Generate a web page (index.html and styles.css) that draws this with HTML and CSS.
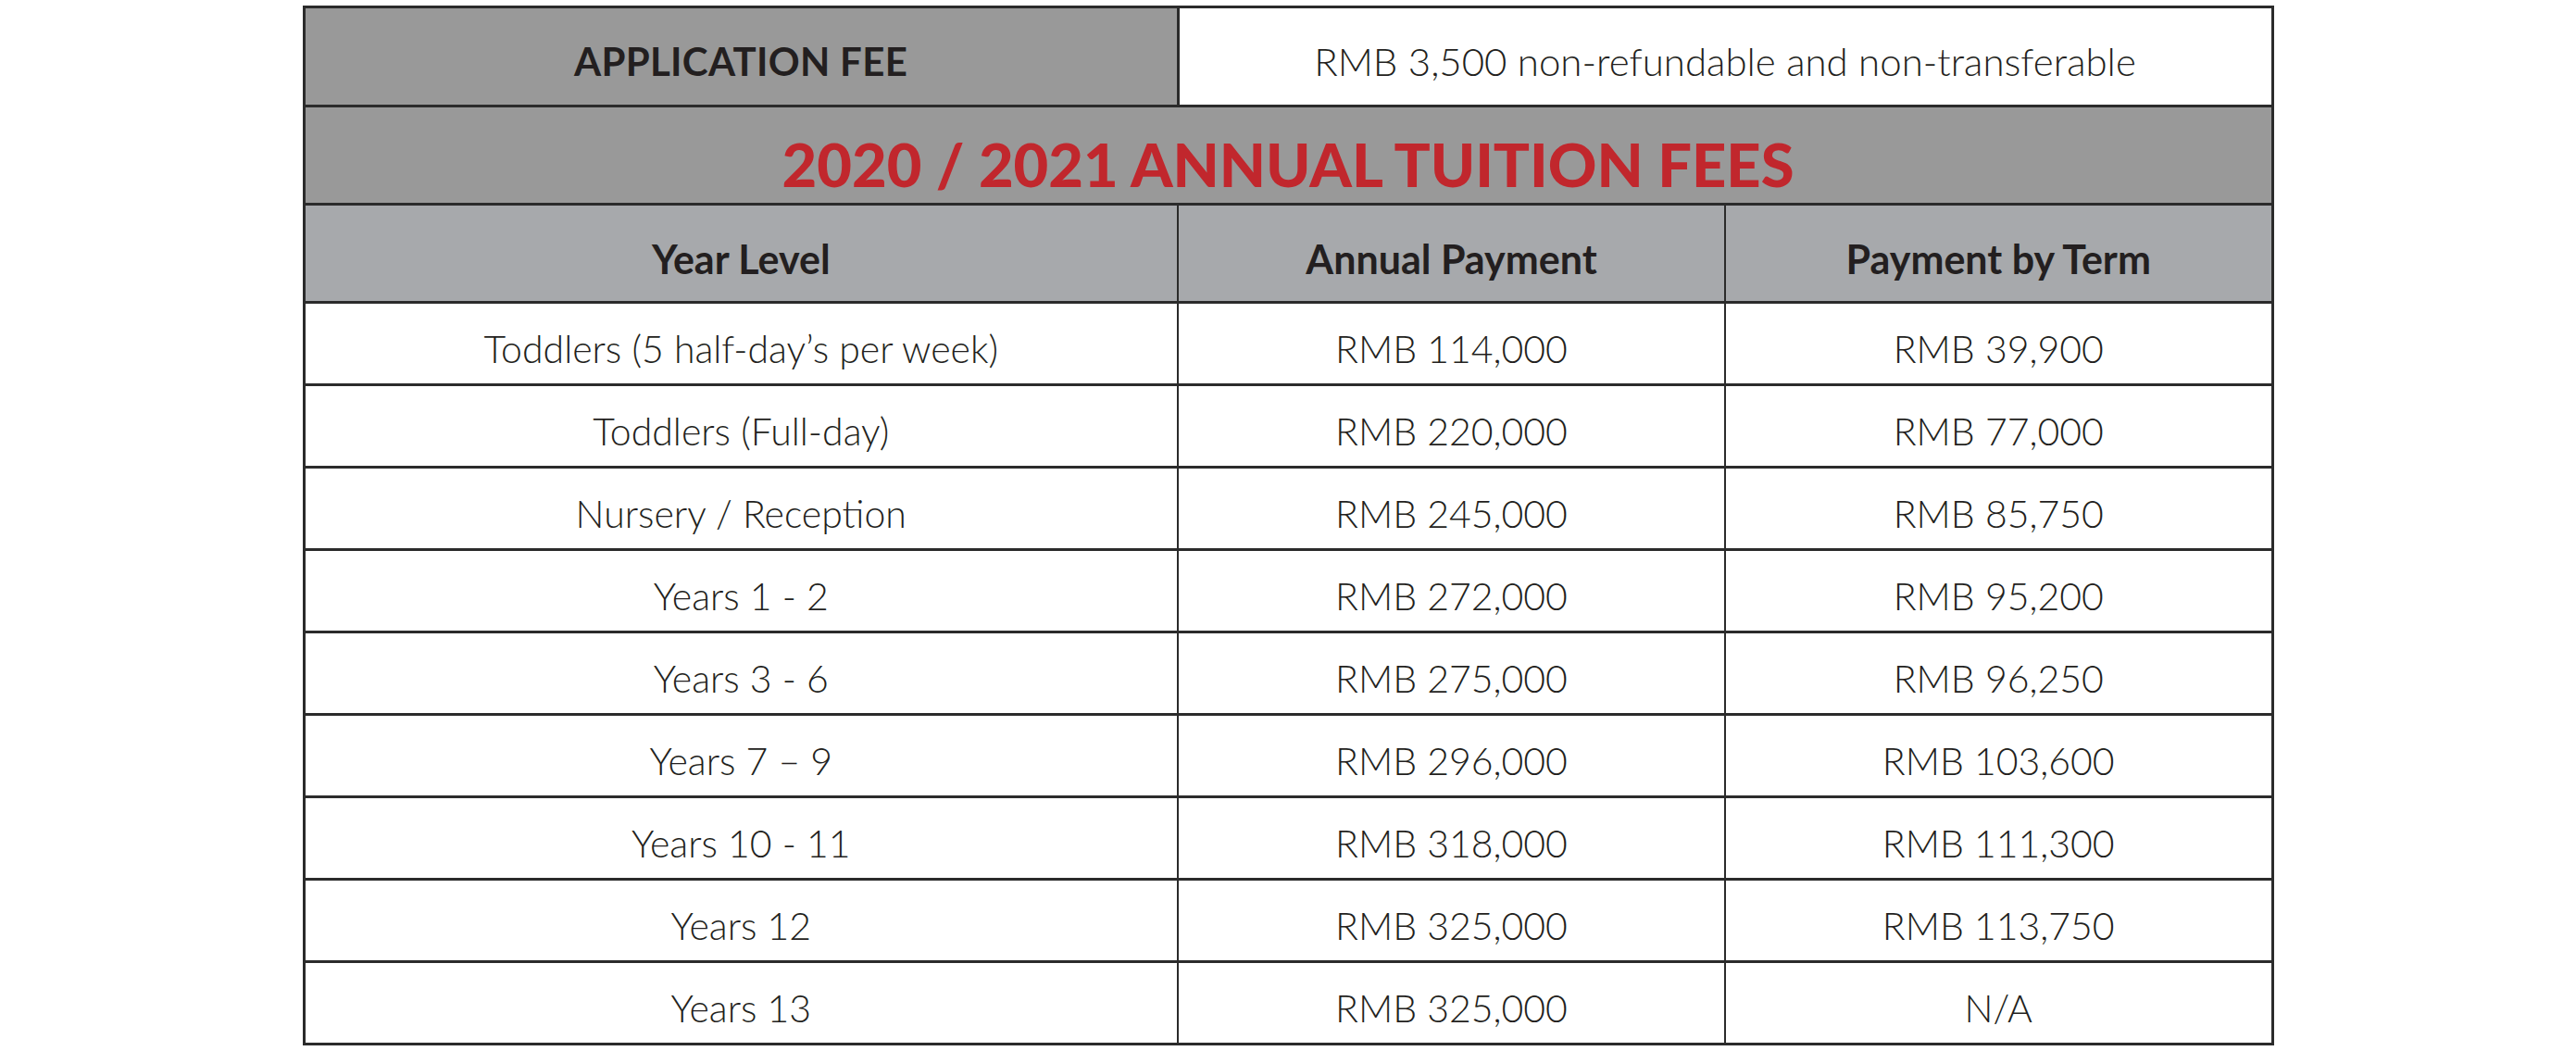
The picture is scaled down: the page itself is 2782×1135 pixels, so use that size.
FILE: index.html
```html
<!DOCTYPE html>
<html lang="en">
<head>
<meta charset="utf-8">
<title>2020 / 2021 Annual Tuition Fees</title>
<link rel="stylesheet" href="styles.css">
</head>
<body>
<div class="page">
<table class="fees">
  <colgroup>
    <col class="c1">
    <col class="c2">
    <col class="c3">
  </colgroup>
  <tbody>
    <tr class="app">
      <th class="app-label">APPLICATION FEE</th>
      <td class="app-value" colspan="2">RMB 3,500 non-refundable and non-transferable</td>
    </tr>
    <tr class="title">
      <th colspan="3">2020 / 2021 ANNUAL TUITION FEES</th>
    </tr>
    <tr class="head">
      <th>Year Level</th>
      <th>Annual Payment</th>
      <th>Payment by Term</th>
    </tr>
    <tr class="row"><td>Toddlers (5 half-day’s per week)</td><td>RMB 114,000</td><td>RMB 39,900</td></tr>
    <tr class="row"><td>Toddlers (Full-day)</td><td>RMB 220,000</td><td>RMB 77,000</td></tr>
    <tr class="row"><td>Nursery / Reception</td><td>RMB 245,000</td><td>RMB 85,750</td></tr>
    <tr class="row"><td>Years 1 - 2</td><td>RMB 272,000</td><td>RMB 95,200</td></tr>
    <tr class="row"><td>Years 3 - 6</td><td>RMB 275,000</td><td>RMB 96,250</td></tr>
    <tr class="row"><td>Years 7 – 9</td><td>RMB 296,000</td><td>RMB 103,600</td></tr>
    <tr class="row"><td>Years 10 - 11</td><td>RMB 318,000</td><td>RMB 111,300</td></tr>
    <tr class="row"><td>Years 12</td><td>RMB 325,000</td><td>RMB 113,750</td></tr>
    <tr class="row"><td>Years 13</td><td>RMB 325,000</td><td>N/A</td></tr>
  </tbody>
</table>
</div>
</body>
</html>
```

FILE: styles.css
```css
html, body {
  margin: 0;
  padding: 0;
  background: #ffffff;
}

.page {
  padding-top: 6px;
  display: flex;
  justify-content: center;
}

.fees {
  border-collapse: collapse;
  table-layout: fixed;
  width: 2129px;
  font-family: "Lato", "Noto Sans", sans-serif;
  color: #231f20;
  border: 3px solid #2b2b2b;
}

.c1 { width: 944px; }
.c2 { width: 591px; }
.c3 { width: 591px; }

.fees th,
.fees td {
  border: 3px solid #2b2b2b;
  text-align: center;
  vertical-align: middle;
  padding: 0;
  line-height: 1.2;
}

.fees td {
  border-left-width: 2px;
  border-right-width: 2px;
}

.app th,
.app td {
  height: 94px;
  padding-top: 10px;
}

.app-label {
  background: #999999;
  font-size: 42px;
  font-weight: 700;
  letter-spacing: 0.3px;
}

.app-value {
  background: #ffffff;
  font-size: 42px;
  font-weight: 300;
}

.title th {
  height: 85px;
  padding-top: 18px;
  background: #999999;
  color: #c1272d;
  font-size: 65px;
  font-weight: 900;
}

.head th {
  height: 91px;
  padding-top: 12px;
  background: #a7a9ac;
  font-size: 43px;
  font-weight: 700;
  border-left-width: 2px;
  border-right-width: 2px;
}

.row td {
  height: 74px;
  padding-top: 12px;
  font-size: 41px;
  font-weight: 300;
}
```
